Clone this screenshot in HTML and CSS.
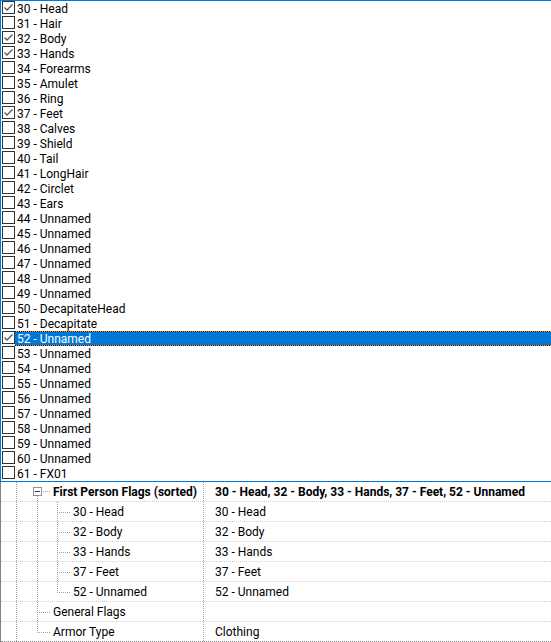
FILE: index.html
```html
<!DOCTYPE html>
<html>
<head>
<meta charset="utf-8">
<link rel="stylesheet" href="styles.css">
</head>
<body>
<div class="list">
  <div class="item"><span class="cb on"><svg viewBox="0 0 11 11"><path d="M1.5 5.5 L4 8 L9.5 2.5"/></svg></span><span class="lbl">30 - Head</span></div>
  <div class="item"><span class="cb"></span><span class="lbl">31 - Hair</span></div>
  <div class="item"><span class="cb on"><svg viewBox="0 0 11 11"><path d="M1.5 5.5 L4 8 L9.5 2.5"/></svg></span><span class="lbl">32 - Body</span></div>
  <div class="item"><span class="cb on"><svg viewBox="0 0 11 11"><path d="M1.5 5.5 L4 8 L9.5 2.5"/></svg></span><span class="lbl">33 - Hands</span></div>
  <div class="item"><span class="cb"></span><span class="lbl">34 - Forearms</span></div>
  <div class="item"><span class="cb"></span><span class="lbl">35 - Amulet</span></div>
  <div class="item"><span class="cb"></span><span class="lbl">36 - Ring</span></div>
  <div class="item"><span class="cb on"><svg viewBox="0 0 11 11"><path d="M1.5 5.5 L4 8 L9.5 2.5"/></svg></span><span class="lbl">37 - Feet</span></div>
  <div class="item"><span class="cb"></span><span class="lbl">38 - Calves</span></div>
  <div class="item"><span class="cb"></span><span class="lbl">39 - Shield</span></div>
  <div class="item"><span class="cb"></span><span class="lbl">40 - Tail</span></div>
  <div class="item"><span class="cb"></span><span class="lbl">41 - LongHair</span></div>
  <div class="item"><span class="cb"></span><span class="lbl">42 - Circlet</span></div>
  <div class="item"><span class="cb"></span><span class="lbl">43 - Ears</span></div>
  <div class="item"><span class="cb"></span><span class="lbl">44 - Unnamed</span></div>
  <div class="item"><span class="cb"></span><span class="lbl">45 - Unnamed</span></div>
  <div class="item"><span class="cb"></span><span class="lbl">46 - Unnamed</span></div>
  <div class="item"><span class="cb"></span><span class="lbl">47 - Unnamed</span></div>
  <div class="item"><span class="cb"></span><span class="lbl">48 - Unnamed</span></div>
  <div class="item"><span class="cb"></span><span class="lbl">49 - Unnamed</span></div>
  <div class="item"><span class="cb"></span><span class="lbl">50 - DecapitateHead</span></div>
  <div class="item"><span class="cb"></span><span class="lbl">51 - Decapitate</span></div>
  <div class="item"><span class="cb on"><svg viewBox="0 0 11 11"><path d="M1.5 5.5 L4 8 L9.5 2.5"/></svg></span><span class="lbl sel">52 - Unnamed</span></div>
  <div class="item"><span class="cb"></span><span class="lbl">53 - Unnamed</span></div>
  <div class="item"><span class="cb"></span><span class="lbl">54 - Unnamed</span></div>
  <div class="item"><span class="cb"></span><span class="lbl">55 - Unnamed</span></div>
  <div class="item"><span class="cb"></span><span class="lbl">56 - Unnamed</span></div>
  <div class="item"><span class="cb"></span><span class="lbl">57 - Unnamed</span></div>
  <div class="item"><span class="cb"></span><span class="lbl">58 - Unnamed</span></div>
  <div class="item"><span class="cb"></span><span class="lbl">59 - Unnamed</span></div>
  <div class="item"><span class="cb"></span><span class="lbl">60 - Unnamed</span></div>
  <div class="item"><span class="cb"></span><span class="lbl">61 - FX01</span></div>
</div>
<div class="tree">
  <div class="row">
    <div class="name"><span class="ind pipe"></span><span class="ind exp"><span class="box"></span></span><span class="txt bold">First Person Flags (sorted)</span></div>
    <div class="val bold">30 - Head, 32 - Body, 33 - Hands, 37 - Feet, 52 - Unnamed</div>
  </div>
  <div class="row">
    <div class="name"><span class="ind pipe"></span><span class="ind pipe"></span><span class="ind tee"></span><span class="txt">30 - Head</span></div>
    <div class="val">30 - Head</div>
  </div>
  <div class="row">
    <div class="name"><span class="ind pipe"></span><span class="ind pipe"></span><span class="ind tee"></span><span class="txt">32 - Body</span></div>
    <div class="val">32 - Body</div>
  </div>
  <div class="row">
    <div class="name"><span class="ind pipe"></span><span class="ind pipe"></span><span class="ind tee"></span><span class="txt">33 - Hands</span></div>
    <div class="val">33 - Hands</div>
  </div>
  <div class="row">
    <div class="name"><span class="ind pipe"></span><span class="ind pipe"></span><span class="ind tee"></span><span class="txt">37 - Feet</span></div>
    <div class="val">37 - Feet</div>
  </div>
  <div class="row">
    <div class="name"><span class="ind pipe"></span><span class="ind pipe"></span><span class="ind elbow"></span><span class="txt">52 - Unnamed</span></div>
    <div class="val">52 - Unnamed</div>
  </div>
  <div class="row">
    <div class="name"><span class="ind pipe"></span><span class="ind tee"></span><span class="txt">General Flags</span></div>
    <div class="val"></div>
  </div>
  <div class="row last">
    <div class="name"><span class="ind pipe"></span><span class="ind elbow"></span><span class="txt">Armor Type</span></div>
    <div class="val">Clothing</div>
  </div>
</div>
</body>
</html>
```
FILE: styles.css
```css
html, body {
  margin: 0;
  padding: 0;
  background: #fff;
  overflow: hidden;
}
body {
  width: 551px;
  height: 642px;
  font-family: Roboto, "Noto Sans", sans-serif;
  font-size: 12px;
  color: #000;
}
.list {
  border-top: 1px solid #0078d7;
  border-left: 1px solid #0078d7;
  border-bottom: 1px solid #0078d7;
}
.item {
  display: flex;
  height: 15px;
  padding-left: 1px;
  white-space: nowrap;
}
.cb {
  flex: none;
  width: 13px;
  height: 13px;
  box-sizing: border-box;
  border: 1px solid #333;
  background: #fff;
  display: flex;
}
.cb svg {
  width: 11px;
  height: 11px;
  fill: none;
  stroke: #555;
  stroke-width: 1.3;
}
.lbl {
  height: 15px;
  box-sizing: border-box;
  padding-top: 1px;
  padding-left: 2px;
  line-height: 15px;
}
.lbl.sel {
  flex: 1;
  color: #fff;
  background-color: #0078d7;
  background-image:
    repeating-linear-gradient(90deg, #1a1a1a 0 1px, #ff8a30 1px 2px),
    repeating-linear-gradient(90deg, #1a1a1a 0 1px, #ff8a30 1px 2px);
  background-size: 100% 1px, 100% 1px;
  background-position: top left, bottom left;
  background-repeat: no-repeat;
}
.tree {
  border-left: 1px solid #828282;
}
.row {
  display: flex;
  height: 20px;
  box-sizing: border-box;
  border-bottom: 1px dotted #cfcfcf;
  white-space: nowrap;
}
.row.last {
  border-bottom-color: #8a8a8a;
}
.name {
  flex: none;
  width: 203px;
  box-sizing: border-box;
  padding-left: 5px;
  display: flex;
  border-right: 1px dotted #a0a0a0;
  line-height: 19px;
}
.val {
  flex: 1;
  padding-left: 11px;
  padding-top: 1px;
  line-height: 19px;
  height: 19px;
  box-sizing: border-box;
}
.bold {
  font-weight: bold;
}
.txt {
  margin-left: 7px;
  padding-top: 1px;
  height: 19px;
  box-sizing: border-box;
}
.ind {
  flex: none;
  width: 20px;
  height: 20px;
  position: relative;
}
.ind::before, .ind::after {
  content: "";
  position: absolute;
}
.pipe::before, .tee::before {
  left: 10px;
  top: 0;
  width: 1px;
  height: 20px;
  background: repeating-linear-gradient(180deg, #a0a0a0 0 1px, transparent 1px 2px);
}
.ind.pipe + .ind::before,
.ind.pipe + .ind.pipe::before {
  left: 11px;
}
.elbow::before {
  left: 11px;
  top: 0;
  width: 1px;
  height: 10px;
  background: repeating-linear-gradient(180deg, #a0a0a0 0 1px, transparent 1px 2px);
}
.tee::after, .elbow::after {
  left: 11px;
  top: 10px;
  width: 14px;
  height: 1px;
  background: repeating-linear-gradient(90deg, #a0a0a0 0 1px, transparent 1px 2px);
}
.ind.pipe + .ind.pipe + .ind::before,
.ind.pipe + .ind.pipe + .ind::after {
  left: 11px;
}
.exp::before {
  left: 11px;
  top: 14px;
  width: 1px;
  height: 6px;
  background: repeating-linear-gradient(180deg, #a0a0a0 0 1px, transparent 1px 2px);
}
.exp::after {
  left: 17px;
  top: 9px;
  width: 8px;
  height: 1px;
  background: repeating-linear-gradient(90deg, #a0a0a0 0 1px, transparent 1px 2px);
}
.box {
  position: absolute;
  left: 7px;
  top: 5px;
  width: 9px;
  height: 9px;
  box-sizing: border-box;
  border: 1px solid #919191;
  background: #fff;
}
.box::after {
  content: "";
  position: absolute;
  left: 1px;
  top: 3px;
  width: 5px;
  height: 1px;
  background: #1e3a5f;
}
```
